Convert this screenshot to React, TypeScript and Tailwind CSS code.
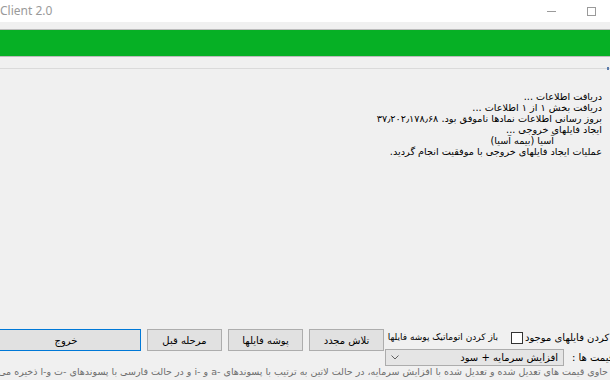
import React from "react";

const fa = { fontFamily: '"DejaVu Sans", sans-serif' };

function Btn({ label, w, focused }: { label: string; w: string; focused?: boolean }) {
  return (
    <div
      className={`${w} h-[22px] shrink-0 flex items-center justify-center bg-[#e1e1e1] border ${
        focused ? "border-[#0078d7]" : "border-[#adadad]"
      } text-[10px] text-black`}
      dir="rtl"
      style={fa}
    >
      {label}
    </div>
  );
}

export default function App() {
  return (
    <div className="w-[610px] h-[380px] overflow-hidden bg-[#f0f0f0] flex flex-col relative">
      {/* title bar */}
      <div className="h-[22px] bg-white flex items-center shrink-0">
        <span
          className="text-[12px] text-[#9a9a9a] leading-none"
          style={{ fontFamily: '"Noto Sans", sans-serif' }}
        >
          Client 2.0
        </span>
        <div className="ml-auto flex items-center gap-[31px] pr-[14px]">
          <div className="w-[9px] h-px bg-[#9a9a9a]" />
          <div className="w-[9px] h-[9px] border border-[#9a9a9a]" />
        </div>
      </div>
      <div className="h-[7px] shrink-0" />
      {/* progress bar */}
      <div className="h-[28px] shrink-0 -mx-2 border-y border-[#bcbcbc] bg-[#06b025]" />
      <div className="h-[11px] shrink-0" />
      {/* log area */}
      <div className="h-[257px] shrink-0 border-t border-[#dadada] relative">
        <div className="absolute right-[1px] -top-[2px] w-[2px] h-[3px] bg-[#5b7bab]" />
        <div
          className="pt-[22px] pr-[8px] text-[9.7px] leading-[11px] text-black"
          dir="rtl"
          style={fa}
        >
          <div>دریافت اطلاعات ...</div>
          <div>دریافت بخش ۱ از ۱ اطلاعات ...</div>
          <div>بروز رسانی اطلاعات نمادها ناموفق بود. ۳۷٫۲۰۲٫۱۷۸٫۶۸</div>
          <div>ایجاد فایلهای خروجی ...</div>
          <div className="pr-[48px]">آسیا (بیمه آسیا)</div>
          <div>عملیات ایجاد فایلهای خروجی با موفقیت انجام گردید.</div>
        </div>
      </div>
      {/* bottom controls */}
      <div className="flex items-start pt-[4px] shrink-0">
        <div className="flex gap-[6px] -ml-[9px]">
          <Btn label="خروج" w="w-[150px]" focused />
          <Btn label="مرحله قبل" w="w-[75px]" />
          <Btn label="پوشه فایلها" w="w-[75px]" />
          <Btn label="تلاش مجدد" w="w-[75px]" />
        </div>
        <div className="flex flex-col shrink-0 ml-[1px] text-[10px] text-black" style={fa}>
          <div className="h-[15px] flex items-center whitespace-nowrap mt-[1px]">
            <span dir="rtl" className="w-[113px] text-right shrink-0 text-[9px]">باز کردن اتوماتیک پوشه فایلها</span>
            <div className="w-[12px] h-[12px] border border-[#333] bg-white ml-[13px] mr-[2px] shrink-0" />
            <span dir="rtl">جایگزین کردن فایلهای موجود</span>
          </div>
          <div className="flex items-center whitespace-nowrap mt-[4px]">
            <div
              className="w-[179px] h-[17px] shrink-0 bg-[#e5e5e5] border border-[#acacac] flex items-center justify-between pl-[5px] pr-[5px]"
              dir="ltr"
            >
              <svg width="8" height="5" viewBox="0 0 8 5">
                <path d="M0.5 0.5 L4 4 L7.5 0.5" fill="none" stroke="#606060" strokeWidth="1" />
              </svg>
              <span dir="rtl">افزایش سرمایه + سود</span>
            </div>
            <span dir="rtl" className="ml-[8px]">نوع قیمت ها :</span>
          </div>
        </div>
      </div>
      <div
        className="pr-[2px] -mt-[1px] whitespace-nowrap text-[9.5px] text-[#6d6d6d]"
        dir="rtl"
        style={fa}
      >
        حاوی قیمت های تعدیل شده و تعدیل شده با افزایش سرمایه، در حالت لاتین به ترتیب با پسوندهای -a و -i و در حالت فارسی با پسوندهای -ت و-ا ذخیره می‌شوند.
      </div>
    </div>
  );
}
